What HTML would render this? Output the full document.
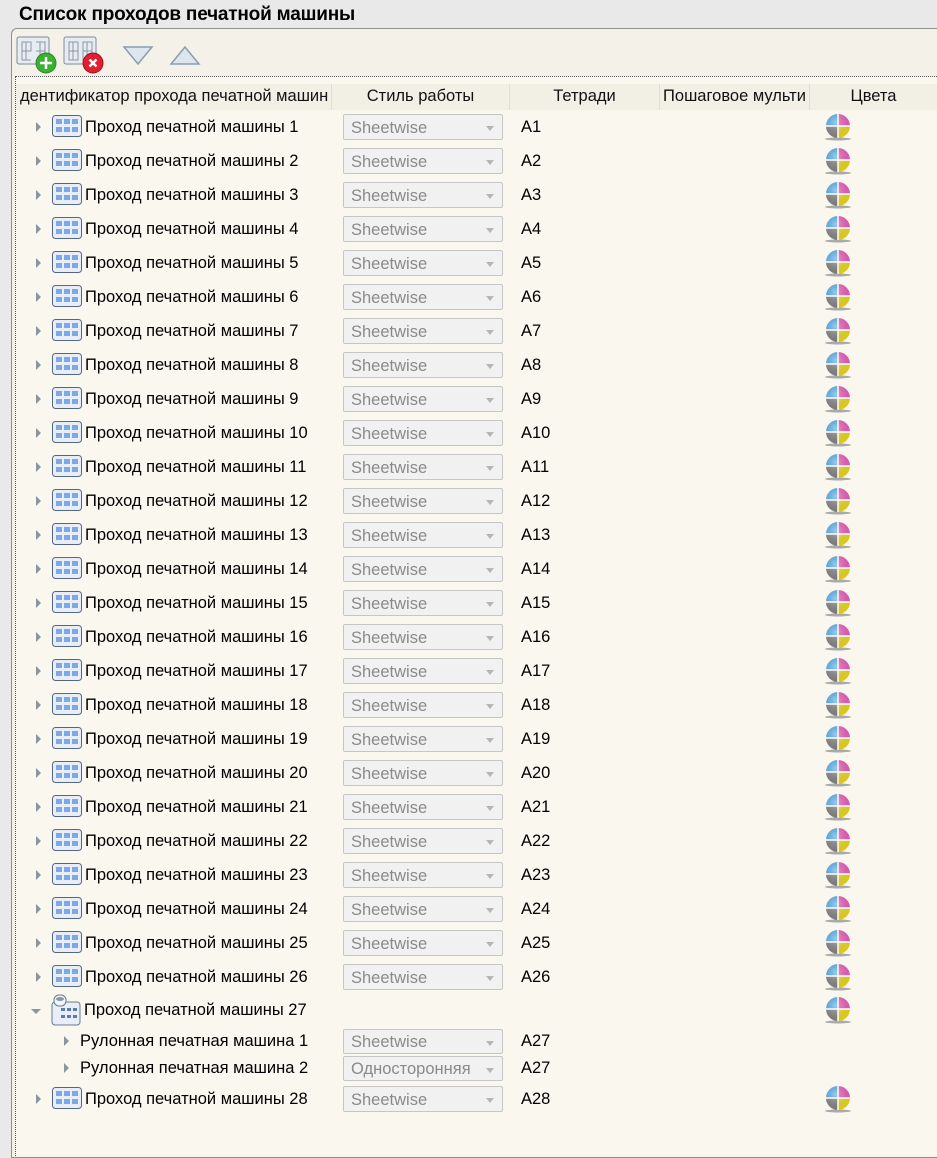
<!DOCTYPE html>
<html><head><meta charset="utf-8">
<style>
*{margin:0;padding:0;box-sizing:border-box}
body{width:937px;height:1142px;overflow:hidden;background:#e9e9e9;font-family:"Liberation Sans","DejaVu Sans",sans-serif;position:relative}
.title{position:absolute;left:19px;top:4px;font-size:19px;font-weight:bold;color:#000;letter-spacing:-0.2px}
.panel{position:absolute;left:11px;top:28px;width:940px;height:1130px;border:1px solid #8f8f8f;border-radius:6px 0 0 0;background:#f3f1e8}
.list{position:absolute;left:15px;top:76px;width:930px;height:1080px;border-top:1px dotted #555;border-left:1px dotted #555;background:#faf7ef}
.hdr{position:absolute;left:16px;top:84px;width:921px;height:26px;background:#f2efe5;font-size:16.5px;color:#111}
.hdr div{position:absolute;top:0;height:26px;line-height:24px;border-right:1px solid #e0ddd3;text-align:center;white-space:nowrap;overflow:hidden}
.row{position:absolute;left:0;width:937px;height:34px;font-size:16.5px;color:#000}
.arr{position:absolute;left:36px;top:12px;width:0;height:0;border-top:5px solid transparent;border-bottom:5px solid transparent;border-left:5px solid #8a959c}
.gi{position:absolute;left:52px;top:5px}
.nm{position:absolute;left:85px;top:8px;white-space:nowrap}
.cb{position:absolute;left:343px;top:4px;width:160px;height:26px;border:1px solid #c6c6c6;border-radius:2px;background:#f1f1f1;color:#8a8a8a;font-size:16.5px;padding-left:7px;line-height:26px}
.cb:after{content:"";position:absolute;right:8px;top:11px;border-left:4px solid transparent;border-right:4px solid transparent;border-top:5px solid #b5b5b5}
.tt{position:absolute;left:521px;top:8px}
.ci{position:absolute;left:824px;top:3px}
</style></head><body>
<svg width="0" height="0" style="position:absolute">
<defs>
<symbol id="g" viewBox="0 0 30 22"><rect x="0.5" y="0.5" width="29" height="21" rx="3" fill="#e8eef8" stroke="#55677f"/><g fill="#7fa8e8"><rect x="4" y="4" width="6" height="5"/><rect x="12" y="4" width="6" height="5"/><rect x="20" y="4" width="6" height="5"/><rect x="4" y="12" width="6" height="5"/><rect x="12" y="12" width="6" height="5"/><rect x="20" y="12" width="6" height="5"/></g></symbol>
<radialGradient id="sh" cx="0.4" cy="0.35" r="0.7"><stop offset="0" stop-color="#fff" stop-opacity="0.35"/><stop offset="1" stop-color="#000" stop-opacity="0.1"/></radialGradient>
<symbol id="c" viewBox="0 0 28 28"><ellipse cx="14" cy="26" rx="13" ry="1.5" fill="#aaa"/><path d="M14 13V1A12 12 0 0 0 2 13Z" fill="#5ab4f0"/><path d="M14 13V1A12 12 0 0 1 26 13Z" fill="#f060c0"/><path d="M14 13H2A12 12 0 0 0 14 25Z" fill="#8a8a8a"/><path d="M14 13H26A12 12 0 0 1 14 25Z" fill="#f5e020"/><circle cx="14" cy="13" r="12" fill="url(#sh)"/><path d="M2 13H26M14 1V25" stroke="#fff" stroke-width="1.5"/></symbol>
</defs></svg>
<div class="title">Список проходов печатной машины</div>
<div class="panel"></div>
<svg style="position:absolute;left:14px;top:34px" width="95" height="42">
<rect x="3" y="3" width="32" height="27" rx="2" fill="#e8ecf2" stroke="#7d8a99"/><path d="M8 8h9v9h-9zM12 8v18M8 17v9M22 8h9v18M26 8v18M22 17h9M8 26h9M22 26h9" stroke="#8a96a6" fill="none"/>
<circle cx="32" cy="29" r="10" fill="#3cb030" stroke="#2a8a20"/><path d="M32 23v12M26 29h12" stroke="#fff" stroke-width="2.5"/>
<rect x="50" y="3" width="32" height="27" rx="2" fill="#e8ecf2" stroke="#7d8a99"/><path d="M55 8h9v18h-9zM59 8v18M55 17h9M69 8h9v18h-9zM73 8v18M69 17h9" stroke="#8a96a6" fill="none"/>
<circle cx="79" cy="29" r="10" fill="#e02030" stroke="#a01018"/><path d="M75.5 25.5l7 7M82.5 25.5l-7 7" stroke="#fff" stroke-width="2.5"/>
</svg>
<svg style="position:absolute;left:122px;top:44px" width="80" height="24">
<path d="M2 3h28L16 20Z" fill="#dde6ef" stroke="#8b9cae" stroke-width="1.5"/>
<path d="M49 20h28L63 3Z" fill="#dde6ef" stroke="#8b9cae" stroke-width="1.5"/>
</svg>
<div class="list"></div>
<div class="hdr">
<div style="left:0;width:316px;text-align:left;padding-left:4px">дентификатор прохода печатной машин</div>
<div style="left:316px;width:178px">Стиль работы</div>
<div style="left:494px;width:150px">Тетради</div>
<div style="left:644px;width:150px">Пошаговое мульти</div>
<div style="left:794px;width:127px;border:none">Цвета</div>
</div>

<div class="row" style="top:110px"><i class="arr"></i><svg class="gi" width="30" height="22"><use href="#g"/></svg><span class="nm">Проход печатной машины 1</span><div class="cb">Sheetwise</div><span class="tt">A1</span><svg class="ci" width="28" height="28"><use href="#c"/></svg></div>
<div class="row" style="top:144px"><i class="arr"></i><svg class="gi" width="30" height="22"><use href="#g"/></svg><span class="nm">Проход печатной машины 2</span><div class="cb">Sheetwise</div><span class="tt">A2</span><svg class="ci" width="28" height="28"><use href="#c"/></svg></div>
<div class="row" style="top:178px"><i class="arr"></i><svg class="gi" width="30" height="22"><use href="#g"/></svg><span class="nm">Проход печатной машины 3</span><div class="cb">Sheetwise</div><span class="tt">A3</span><svg class="ci" width="28" height="28"><use href="#c"/></svg></div>
<div class="row" style="top:212px"><i class="arr"></i><svg class="gi" width="30" height="22"><use href="#g"/></svg><span class="nm">Проход печатной машины 4</span><div class="cb">Sheetwise</div><span class="tt">A4</span><svg class="ci" width="28" height="28"><use href="#c"/></svg></div>
<div class="row" style="top:246px"><i class="arr"></i><svg class="gi" width="30" height="22"><use href="#g"/></svg><span class="nm">Проход печатной машины 5</span><div class="cb">Sheetwise</div><span class="tt">A5</span><svg class="ci" width="28" height="28"><use href="#c"/></svg></div>
<div class="row" style="top:280px"><i class="arr"></i><svg class="gi" width="30" height="22"><use href="#g"/></svg><span class="nm">Проход печатной машины 6</span><div class="cb">Sheetwise</div><span class="tt">A6</span><svg class="ci" width="28" height="28"><use href="#c"/></svg></div>
<div class="row" style="top:314px"><i class="arr"></i><svg class="gi" width="30" height="22"><use href="#g"/></svg><span class="nm">Проход печатной машины 7</span><div class="cb">Sheetwise</div><span class="tt">A7</span><svg class="ci" width="28" height="28"><use href="#c"/></svg></div>
<div class="row" style="top:348px"><i class="arr"></i><svg class="gi" width="30" height="22"><use href="#g"/></svg><span class="nm">Проход печатной машины 8</span><div class="cb">Sheetwise</div><span class="tt">A8</span><svg class="ci" width="28" height="28"><use href="#c"/></svg></div>
<div class="row" style="top:382px"><i class="arr"></i><svg class="gi" width="30" height="22"><use href="#g"/></svg><span class="nm">Проход печатной машины 9</span><div class="cb">Sheetwise</div><span class="tt">A9</span><svg class="ci" width="28" height="28"><use href="#c"/></svg></div>
<div class="row" style="top:416px"><i class="arr"></i><svg class="gi" width="30" height="22"><use href="#g"/></svg><span class="nm">Проход печатной машины 10</span><div class="cb">Sheetwise</div><span class="tt">A10</span><svg class="ci" width="28" height="28"><use href="#c"/></svg></div>
<div class="row" style="top:450px"><i class="arr"></i><svg class="gi" width="30" height="22"><use href="#g"/></svg><span class="nm">Проход печатной машины 11</span><div class="cb">Sheetwise</div><span class="tt">A11</span><svg class="ci" width="28" height="28"><use href="#c"/></svg></div>
<div class="row" style="top:484px"><i class="arr"></i><svg class="gi" width="30" height="22"><use href="#g"/></svg><span class="nm">Проход печатной машины 12</span><div class="cb">Sheetwise</div><span class="tt">A12</span><svg class="ci" width="28" height="28"><use href="#c"/></svg></div>
<div class="row" style="top:518px"><i class="arr"></i><svg class="gi" width="30" height="22"><use href="#g"/></svg><span class="nm">Проход печатной машины 13</span><div class="cb">Sheetwise</div><span class="tt">A13</span><svg class="ci" width="28" height="28"><use href="#c"/></svg></div>
<div class="row" style="top:552px"><i class="arr"></i><svg class="gi" width="30" height="22"><use href="#g"/></svg><span class="nm">Проход печатной машины 14</span><div class="cb">Sheetwise</div><span class="tt">A14</span><svg class="ci" width="28" height="28"><use href="#c"/></svg></div>
<div class="row" style="top:586px"><i class="arr"></i><svg class="gi" width="30" height="22"><use href="#g"/></svg><span class="nm">Проход печатной машины 15</span><div class="cb">Sheetwise</div><span class="tt">A15</span><svg class="ci" width="28" height="28"><use href="#c"/></svg></div>
<div class="row" style="top:620px"><i class="arr"></i><svg class="gi" width="30" height="22"><use href="#g"/></svg><span class="nm">Проход печатной машины 16</span><div class="cb">Sheetwise</div><span class="tt">A16</span><svg class="ci" width="28" height="28"><use href="#c"/></svg></div>
<div class="row" style="top:654px"><i class="arr"></i><svg class="gi" width="30" height="22"><use href="#g"/></svg><span class="nm">Проход печатной машины 17</span><div class="cb">Sheetwise</div><span class="tt">A17</span><svg class="ci" width="28" height="28"><use href="#c"/></svg></div>
<div class="row" style="top:688px"><i class="arr"></i><svg class="gi" width="30" height="22"><use href="#g"/></svg><span class="nm">Проход печатной машины 18</span><div class="cb">Sheetwise</div><span class="tt">A18</span><svg class="ci" width="28" height="28"><use href="#c"/></svg></div>
<div class="row" style="top:722px"><i class="arr"></i><svg class="gi" width="30" height="22"><use href="#g"/></svg><span class="nm">Проход печатной машины 19</span><div class="cb">Sheetwise</div><span class="tt">A19</span><svg class="ci" width="28" height="28"><use href="#c"/></svg></div>
<div class="row" style="top:756px"><i class="arr"></i><svg class="gi" width="30" height="22"><use href="#g"/></svg><span class="nm">Проход печатной машины 20</span><div class="cb">Sheetwise</div><span class="tt">A20</span><svg class="ci" width="28" height="28"><use href="#c"/></svg></div>
<div class="row" style="top:790px"><i class="arr"></i><svg class="gi" width="30" height="22"><use href="#g"/></svg><span class="nm">Проход печатной машины 21</span><div class="cb">Sheetwise</div><span class="tt">A21</span><svg class="ci" width="28" height="28"><use href="#c"/></svg></div>
<div class="row" style="top:824px"><i class="arr"></i><svg class="gi" width="30" height="22"><use href="#g"/></svg><span class="nm">Проход печатной машины 22</span><div class="cb">Sheetwise</div><span class="tt">A22</span><svg class="ci" width="28" height="28"><use href="#c"/></svg></div>
<div class="row" style="top:858px"><i class="arr"></i><svg class="gi" width="30" height="22"><use href="#g"/></svg><span class="nm">Проход печатной машины 23</span><div class="cb">Sheetwise</div><span class="tt">A23</span><svg class="ci" width="28" height="28"><use href="#c"/></svg></div>
<div class="row" style="top:892px"><i class="arr"></i><svg class="gi" width="30" height="22"><use href="#g"/></svg><span class="nm">Проход печатной машины 24</span><div class="cb">Sheetwise</div><span class="tt">A24</span><svg class="ci" width="28" height="28"><use href="#c"/></svg></div>
<div class="row" style="top:926px"><i class="arr"></i><svg class="gi" width="30" height="22"><use href="#g"/></svg><span class="nm">Проход печатной машины 25</span><div class="cb">Sheetwise</div><span class="tt">A25</span><svg class="ci" width="28" height="28"><use href="#c"/></svg></div>
<div class="row" style="top:960px"><i class="arr"></i><svg class="gi" width="30" height="22"><use href="#g"/></svg><span class="nm">Проход печатной машины 26</span><div class="cb">Sheetwise</div><span class="tt">A26</span><svg class="ci" width="28" height="28"><use href="#c"/></svg></div>

<div class="row" style="top:993px">
<i style="position:absolute;left:31px;top:16px;border-left:5px solid transparent;border-right:5px solid transparent;border-top:5px solid #8a959c"></i>
<svg style="position:absolute;left:51px;top:1px" width="32" height="32" viewBox="0 0 32 32"><rect x="1" y="8" width="28" height="23" rx="3" fill="#e8eef8" stroke="#6a7a8e"/><rect x="3" y="1" width="12" height="11" rx="5" fill="#f2f4f8" stroke="#6a7a8e"/><ellipse cx="9" cy="5" rx="4" ry="2" fill="#8a96a6"/><g fill="#5a7ab0"><rect x="10" y="14" width="4" height="3"/><rect x="16" y="14" width="4" height="3"/><rect x="22" y="14" width="4" height="3"/><rect x="10" y="21" width="4" height="3"/><rect x="16" y="21" width="4" height="3"/><rect x="22" y="21" width="4" height="3"/></g></svg>
<span class="nm" style="left:84px">Проход печатной машины 27</span><svg class="ci" width="28" height="28"><use href="#c"/></svg></div>
<div class="row" style="top:1024px"><i class="arr" style="left:64px"></i><span class="nm" style="left:80px">Рулонная печатная машина 1</span><div class="cb" style="top:5px;height:25px;line-height:24px">Sheetwise</div><span class="tt">A27</span></div>
<div class="row" style="top:1051px"><i class="arr" style="left:64px"></i><span class="nm" style="left:80px">Рулонная печатная машина 2</span><div class="cb" style="top:5px;height:25px;line-height:24px">Односторонняя</div><span class="tt">A27</span></div>
<div class="row" style="top:1082px"><i class="arr"></i><svg class="gi" width="30" height="22"><use href="#g"/></svg><span class="nm">Проход печатной машины 28</span><div class="cb">Sheetwise</div><span class="tt">A28</span><svg class="ci" width="28" height="28"><use href="#c"/></svg></div>
</body></html>
